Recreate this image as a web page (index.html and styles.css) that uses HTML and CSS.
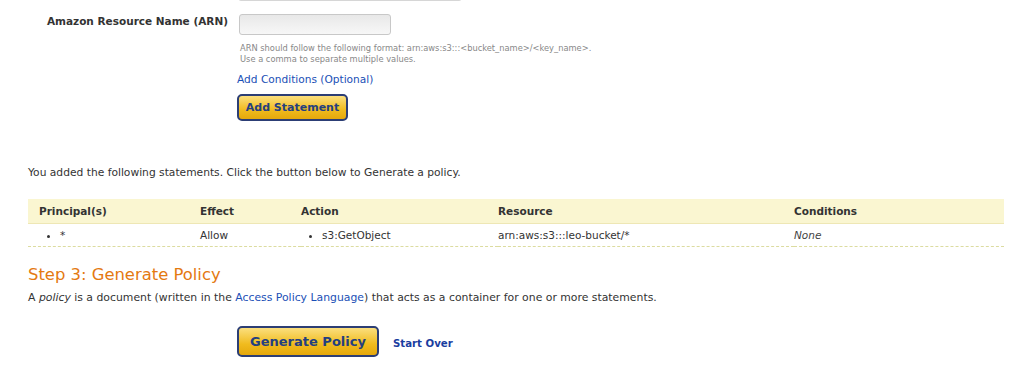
FILE: index.html
```html
<!DOCTYPE html>
<html lang="en">
<head>
    <meta charset="UTF-8">
    <title>AWS Policy Generator</title>
    <link rel="stylesheet" href="styles.css">
</head>
<body>
    <div class="page">
        <div class="form-row top-row">
            <div class="label"></div>
            <div class="field"><div class="wide-input"></div></div>
        </div>

        <div class="form-row">
            <div class="label">Amazon Resource Name (ARN)</div>
            <div class="field">
                <input type="text" class="text-input">
                <p class="hint">ARN should follow the following format: arn:aws:s3:::&lt;bucket_name&gt;/&lt;key_name&gt;.<br>Use a comma to separate multiple values.</p>
                <a href="#" class="link">Add Conditions (Optional)</a>
                <div><button class="btn btn-small">Add Statement</button></div>
            </div>
        </div>

        <p class="intro">You added the following statements. Click the button below to Generate a policy.</p>

        <table class="statements">
            <thead>
                <tr>
                    <th class="col-principal">Principal(s)</th>
                    <th class="col-effect">Effect</th>
                    <th class="col-action">Action</th>
                    <th class="col-resource">Resource</th>
                    <th>Conditions</th>
                </tr>
            </thead>
            <tbody>
                <tr>
                    <td><ul><li>*</li></ul></td>
                    <td>Allow</td>
                    <td><ul><li>s3:GetObject</li></ul></td>
                    <td>arn:aws:s3:::leo-bucket/*</td>
                    <td><em>None</em></td>
                </tr>
            </tbody>
        </table>

        <h2 class="step">Step 3: Generate Policy</h2>
        <p class="desc">A <em>policy</em> is a document (written in the <a href="#" class="link">Access Policy Language</a>) that acts as a container for one or more statements.</p>

        <div class="actions">
            <button class="btn btn-large">Generate Policy</button>
            <a href="#" class="start-over">Start Over</a>
        </div>
    </div>
</body>
</html>
```

FILE: styles.css
```css
body {
    margin: 0;
    font-family: "DejaVu Sans", Verdana, sans-serif;
    font-size: 10px;
    color: #333333;
    background: #ffffff;
}
.page {
    padding: 0 20px 0 28px;
}
.form-row {
    display: grid;
    grid-template-columns: 200px 1fr;
    column-gap: 10px;
}
.top-row {
    height: 14px;
    margin-top: -12px;
    margin-bottom: 12px;
}
.wide-input {
    width: 222px;
    height: 11px;
    border: 1px solid #d6d6d6;
    border-radius: 3px;
    background: #f4f4f4;
}
.label {
    text-align: right;
    font-weight: bold;
    font-size: 10.5px;
    padding-top: 1px;
    color: #333333;
}
.text-input {
    display: block;
    width: 150px;
    height: 19px;
    margin: 0 0 0 1px;
    padding: 0;
    box-sizing: content-box;
    border: 1px solid #c8c8c8;
    border-radius: 3px;
    background: linear-gradient(#e8e8e8, #f7f7f7);
}
.hint {
    margin: 8px 0 0 2px;
    font-size: 8.3px;
    line-height: 11px;
    color: #888888;
}
.link {
    color: #1a4fb6;
    text-decoration: none;
}
.field > .link {
    display: inline-block;
    margin-top: 8px;
    margin-left: -1px;
    font-size: 10.6px;
}
.btn {
    font-family: "DejaVu Sans", Verdana, sans-serif;
    font-weight: bold;
    color: #243f80;
    border: 2px solid #2c3e75;
    border-radius: 5px;
    background: linear-gradient(#fbdf7e, #f0bb1e 60%, #e5a80c);
    cursor: pointer;
    padding: 0;
}
.btn-small {
    width: 111px;
    height: 27px;
    margin-top: 9px;
    margin-left: -1px;
    font-size: 11px;
}
.intro {
    margin: 45px 0 0;
    font-size: 10.7px;
}
.statements {
    width: 976px;
    margin-top: 20px;
    border-collapse: collapse;
    font-size: 10.5px;
}
.statements th {
    text-align: left;
    height: 24px;
    padding: 0 0 0 11px;
    background: #faf6d1;
    border-bottom: 1px solid #eee7b5;
    color: #333333;
}
.statements td {
    height: 22px;
    padding: 0 0 0 11px;
    border-bottom: 1px dashed #dcdca0;
}
.statements th:not(:first-child),
.statements td:not(:first-child) {
    padding-left: 0;
}
.col-principal { width: 161px; }
.col-effect { width: 101px; }
.col-action { width: 197px; }
.col-resource { width: 296px; }
.statements ul {
    margin: 0;
    padding: 0 0 0 21px;
}
.statements em {
    color: #444444;
}
.step {
    margin: 18px 0 0;
    font-size: 16.4px;
    font-weight: normal;
    color: #e47911;
}
.desc {
    margin: 7px 0 0;
    font-size: 10.85px;
}
.actions {
    display: flex;
    align-items: center;
    gap: 14px;
    margin: 22px 0 0 209px;
}
.btn-large {
    width: 142px;
    height: 31px;
    font-size: 13px;
}
.start-over {
    color: #1a3da0;
    font-weight: bold;
    font-size: 10.2px;
    text-decoration: none;
    padding-top: 3px;
}
```
